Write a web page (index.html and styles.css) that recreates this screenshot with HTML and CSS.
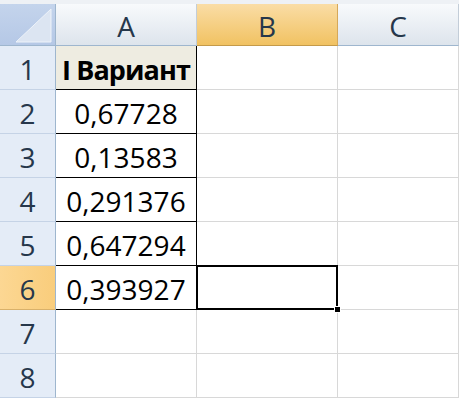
FILE: index.html
```html
<!DOCTYPE html>
<html lang="ru">
<head>
    <meta charset="UTF-8">
    <meta name="viewport" content="width=device-width, initial-scale=1.0">
    <title>Лист1</title>
    <link rel="stylesheet" href="styles.css">
</head>
<body>
    <div class="sheet">
        <div class="corner">
            <svg width="55" height="41" viewBox="0 0 55 41">
                <polygon points="51,5 51,38 16,38" fill="#dce5f2" stroke="#eef3fa" stroke-width="1"/>
            </svg>
        </div>
        <div class="col-head">A</div>
        <div class="col-head active">B</div>
        <div class="col-head">C</div>

        <div class="row-head">1</div>
        <div class="cell boxed title">I Вариант</div>
        <div class="cell"></div>
        <div class="cell"></div>

        <div class="row-head">2</div>
        <div class="cell boxed">0,67728</div>
        <div class="cell"></div>
        <div class="cell"></div>

        <div class="row-head">3</div>
        <div class="cell boxed">0,13583</div>
        <div class="cell"></div>
        <div class="cell"></div>

        <div class="row-head">4</div>
        <div class="cell boxed">0,291376</div>
        <div class="cell"></div>
        <div class="cell"></div>

        <div class="row-head">5</div>
        <div class="cell boxed">0,647294</div>
        <div class="cell"></div>
        <div class="cell"></div>

        <div class="row-head active">6</div>
        <div class="cell boxed">0,393927</div>
        <div class="cell current">
            <div class="selection"><span class="fill-handle"></span></div>
        </div>
        <div class="cell"></div>

        <div class="row-head">7</div>
        <div class="cell"></div>
        <div class="cell"></div>
        <div class="cell"></div>

        <div class="row-head">8</div>
        <div class="cell"></div>
        <div class="cell"></div>
        <div class="cell"></div>
    </div>
</body>
</html>
```

FILE: styles.css
```css
body {
    margin: 0;
    background-color: #fff;
    font-family: "Open Sans", "Liberation Sans", sans-serif;
}
.sheet {
    display: grid;
    grid-template-columns: 56px 141px 141px 1fr;
    grid-template-rows: 42px repeat(8, 44px);
    width: 459px;
    height: 400px;
    padding-top: 4px;
    box-sizing: border-box;
    overflow: hidden;
    background: linear-gradient(#eef1f5 4px, #fff 4px);
}
.sheet > div {
    box-sizing: border-box;
    display: flex;
    align-items: center;
    justify-content: center;
    padding-top: 3px;
    font-size: 28px;
    color: #000;
}
.corner {
    background: linear-gradient(#c4d4ec, #b5c8e6);
    border-right: 1px solid #9eb6ce;
    border-bottom: 1px solid #9eb6ce;
    padding-top: 0 !important;
}
.corner svg {
    display: block;
}
.col-head {
    background: linear-gradient(#f8fafc, #dde4ec);
    border-right: 1px solid #c3cdd8;
    border-bottom: 1px solid #9eb6ce;
    color: #26374b !important;
}
.col-head.active {
    background: linear-gradient(#fadda6, #f1c262);
    border-right-color: #d5a85a;
    border-bottom-color: #c49a4a;
}
.row-head {
    background-color: #e4ecf7;
    border-right: 1px solid #9eb6ce;
    border-bottom: 1px solid #c5d3e6;
    color: #26374b !important;
}
.row-head.active {
    background: linear-gradient(90deg, #fcd793, #f9cd7c);
    border-bottom-color: #d9b16a;
}
.cell {
    border-right: 1px solid #d8d8d8;
    border-bottom: 1px solid #d8d8d8;
}
.cell.boxed {
    border-right-color: #000;
    border-bottom-color: #000;
}
.cell.title {
    background-color: #eeece1;
    font-weight: 700;
    font-size: 27px !important;
    letter-spacing: -0.9px;
}
.cell.current {
    position: relative;
}
.selection {
    position: absolute;
    top: -1px;
    left: -1px;
    right: -1px;
    bottom: -1px;
    border: 2px solid #000;
}
.fill-handle {
    position: absolute;
    right: -5px;
    bottom: -5px;
    width: 5px;
    height: 5px;
    background-color: #000;
    border: 1px solid #fff;
}
```
